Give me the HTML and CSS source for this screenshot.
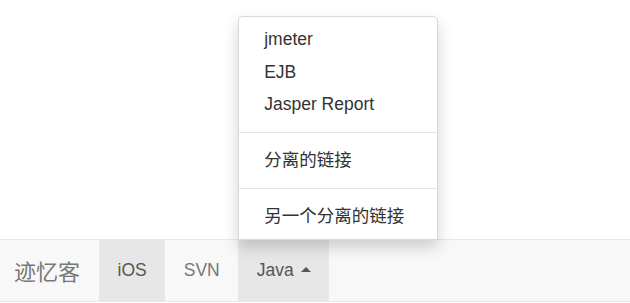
FILE: index.html
```html
<!DOCTYPE html>
<html lang="zh-CN">
<head>
<meta charset="utf-8">
<title>迹忆客</title>
<link rel="stylesheet" href="styles.css">
</head>
<body>
<div class="page">
  <nav class="navbar">
    <a class="brand" href="#">迹忆客</a>
    <ul class="nav">
      <li class="item active"><a href="#">iOS</a></li>
      <li class="item"><a href="#">SVN</a></li>
      <li class="item active dropup">
        <a href="#">Java <span class="caret"></span></a>
        <ul class="menu">
          <li><a href="#">jmeter</a></li>
          <li><a href="#">EJB</a></li>
          <li><a href="#">Jasper Report</a></li>
          <li class="divider"></li>
          <li><a href="#">分离的链接</a></li>
          <li class="divider"></li>
          <li><a href="#">另一个分离的链接</a></li>
        </ul>
      </li>
    </ul>
  </nav>
</div>
</body>
</html>
```

FILE: styles.css
```css
* { box-sizing: border-box; }
html, body { margin: 0; padding: 0; background: #fff; }
body {
  font-family: "Liberation Sans", Arial, "Noto Sans CJK SC", sans-serif;
  font-size: 17.5px;
  line-height: 25px;
  color: #333;
}
a { text-decoration: none; }
.page {
  height: 303px;
  display: flex;
  flex-direction: column;
  justify-content: flex-end;
}
.navbar {
  display: flex;
  align-items: stretch;
  height: 63px;
  margin-bottom: 1px;
  background: #f8f8f8;
  border-top: 1px solid #e7e7e7;
  border-bottom: 1px solid #e7e7e7;
}
.brand {
  display: flex;
  align-items: center;
  padding: 0 19px 0 14px;
  font-family: "Noto Sans CJK SC", sans-serif;
  font-size: 22px;
  color: #777;
}
.nav {
  display: flex;
  list-style: none;
  margin: 0;
  padding: 0;
}
.item {
  position: relative;
}
.item > a {
  display: block;
  padding: 18px 18.5px;
  color: #777;
  white-space: nowrap;
}
.item.active { background: #e7e7e7; }
.item.active > a { color: #555; }
.caret {
  display: inline-block;
  width: 0;
  height: 0;
  margin-left: 2px;
  border-left: 5px solid transparent;
  border-right: 5px solid transparent;
  border-bottom: 5px solid #555;
  vertical-align: middle;
  position: relative;
  top: -2px;
}
.menu {
  position: absolute;
  left: 0;
  bottom: 100%;
  width: 200px;
  margin: 0;
  padding: 6.25px 0;
  list-style: none;
  background: #fff;
  border: 1px solid rgba(0, 0, 0, 0.15);
  border-radius: 5px 5px 0 0;
  box-shadow: 0 7px 15px rgba(0, 0, 0, 0.175);
}
.menu li a {
  display: block;
  padding: 3.75px 25px;
  color: #333;
  white-space: nowrap;
}
.menu .divider {
  height: 1px;
  margin: 11.25px 0;
  background: #e5e5e5;
}
```
